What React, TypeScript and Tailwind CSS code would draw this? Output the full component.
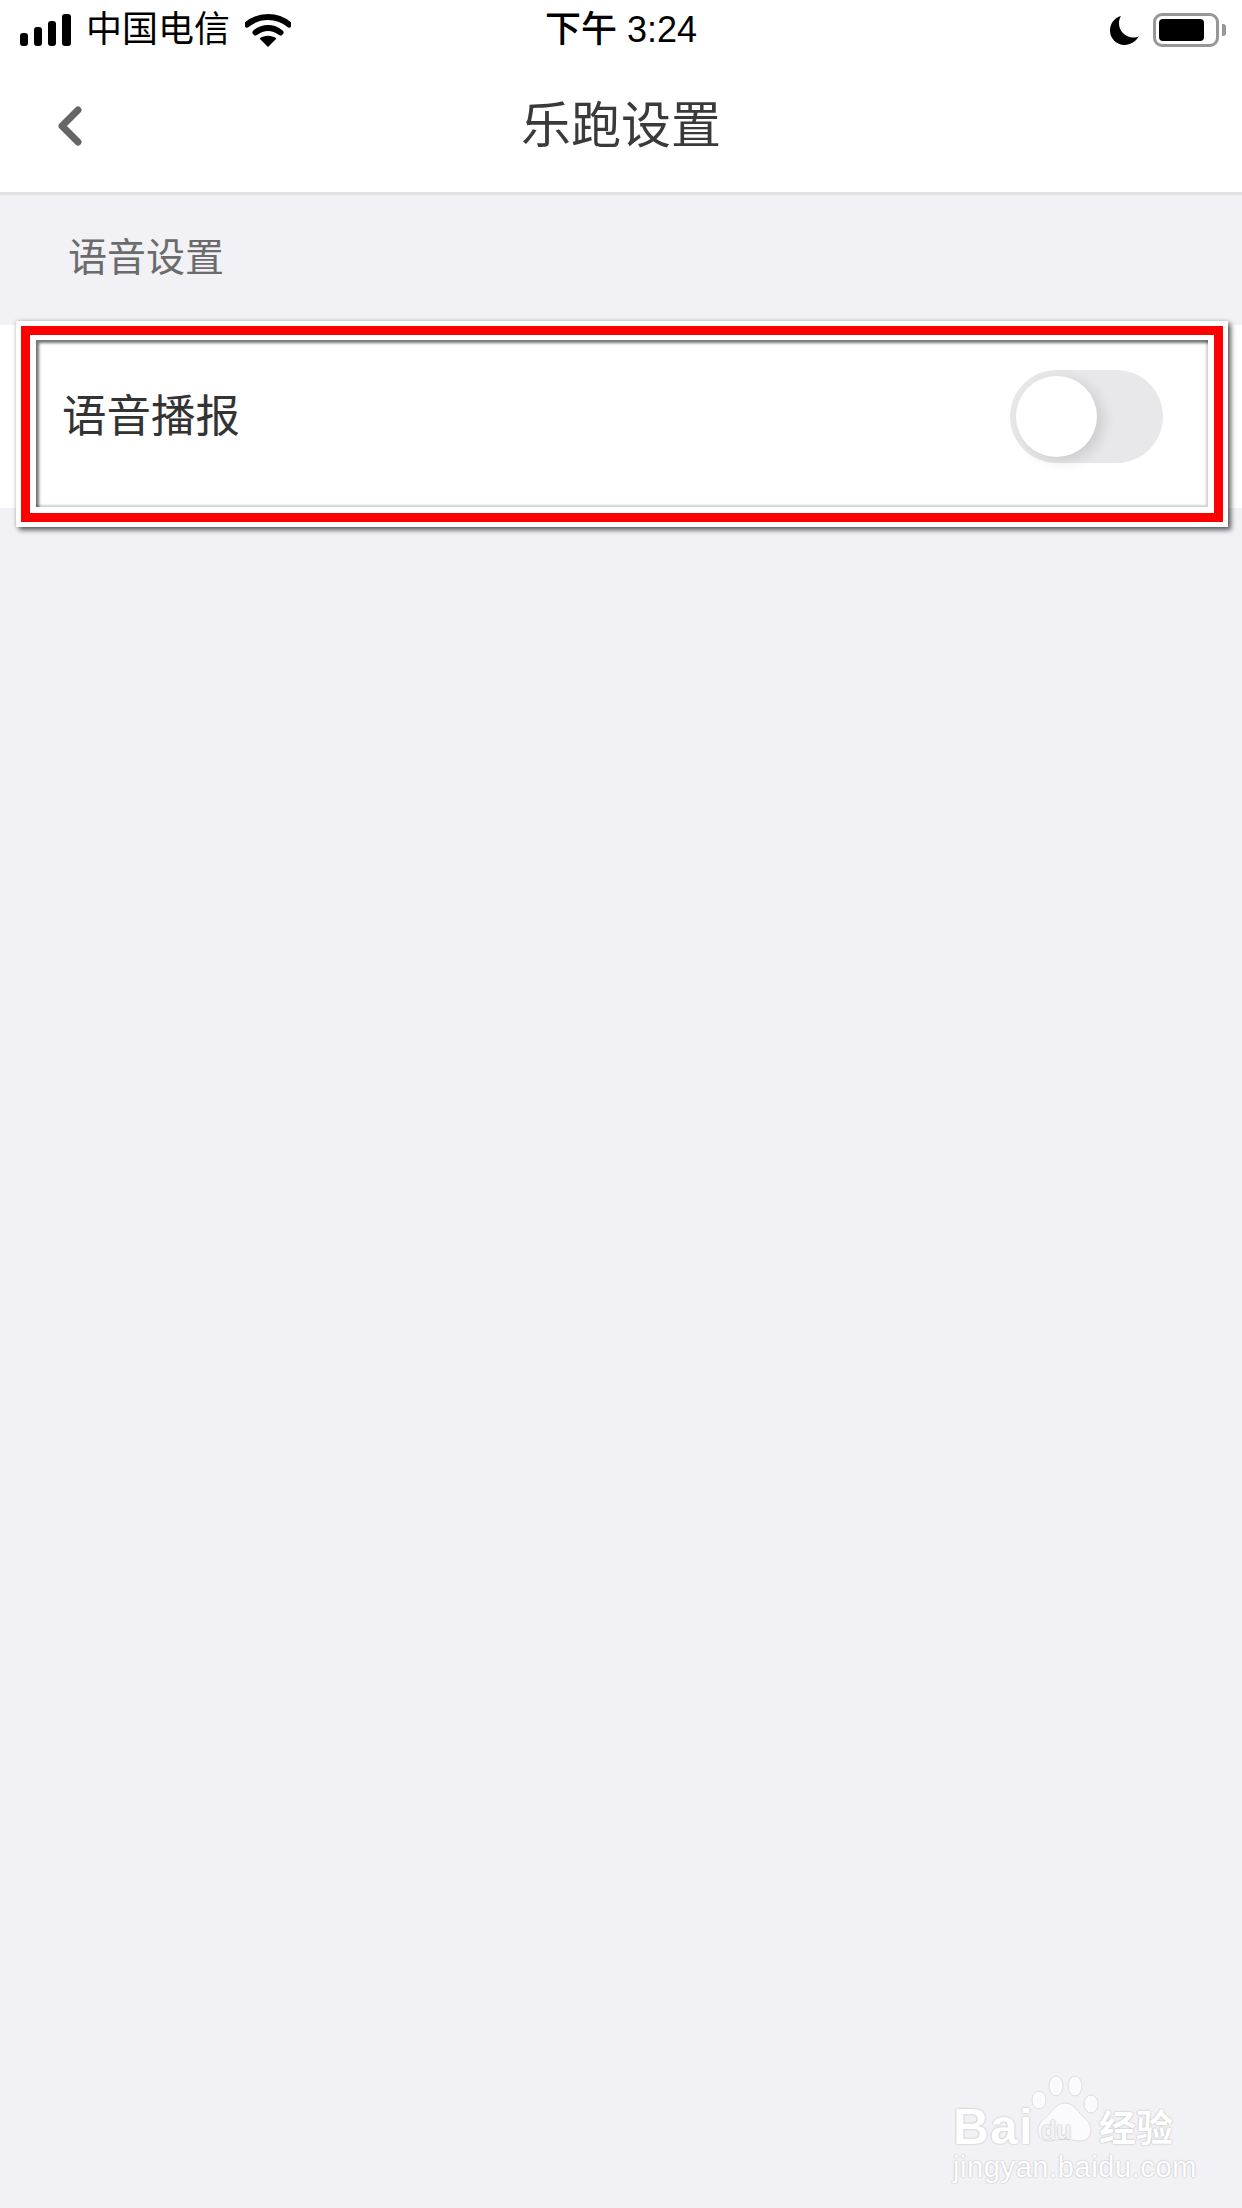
const cjk = "font-['Liberation_Sans','Noto_Sans_CJK_SC',sans-serif]";

function Signal() {
  return (
    <div className="flex items-end gap-[6px] h-[32px]">
      <div className="w-[8px] h-[13px] rounded-[3px] bg-black" />
      <div className="w-[8px] h-[19px] rounded-[3px] bg-black" />
      <div className="w-[8px] h-[25px] rounded-[3px] bg-black" />
      <div className="w-[9px] h-[32px] rounded-[3px] bg-black" />
    </div>
  );
}

function Wifi() {
  return (
    <svg width="46" height="33" viewBox="0 0 46 33" fill="none" className="ml-[15px]">
      <path d="M2 10.5C14 0.5 32 0.5 44 10.5" stroke="#000" strokeWidth="6" strokeLinecap="round" />
      <path d="M10.5 18.5C18 12.5 28 12.5 35.5 18.5" stroke="#000" strokeWidth="6" strokeLinecap="round" />
      <path d="M23 33L14.5 24.5C19.5 20.8 26.5 20.8 31.5 24.5Z" fill="#000" />
    </svg>
  );
}

function Moon() {
  return (
    <svg width="29" height="29" viewBox="0 0 29 29">
      <path d="M11 0C4.5 1.5 0 7.5 0 14.5C0 22.5 6.5 29 14.5 29C20.5 29 26 25.5 29 20C27.5 21 25.500 21.500 23 21.500C15.500 21.500 9 15 9 7.500C9 4.500 9.700 2 11 0Z" fill="#000" />
    </svg>
  );
}

function Battery() {
  return (
    <div className="flex items-center">
      <div className="w-[66px] h-[34px] rounded-[9px] border-[3px] border-[#979797] p-[3px]">
        <div className="w-[45px] h-full rounded-[4px] bg-black" />
      </div>
      <div className="ml-[3px] w-[4px] h-[12px] rounded-r-[3px] bg-[#979797]" />
    </div>
  );
}

function Watermark() {
  return (
    <div className={`absolute left-[953px] top-[2075px] w-[225px] h-[106px] text-white ${cjk}`}>
      <svg width="76" height="70" viewBox="0 0 76 70" className="absolute left-[78px] top-0" fill="#fbfbfd" stroke="#dddde2" strokeWidth="1">
        <ellipse cx="8" cy="25" rx="7" ry="9" />
        <ellipse cx="25" cy="11" rx="7" ry="10" />
        <ellipse cx="44" cy="11" rx="7" ry="10" />
        <ellipse cx="60" cy="29" rx="7" ry="9" />
        <path d="M34 28C44 28 47 38 55 44C62 50 62 66 50 66C42 66 38 64 33 64C27 64 24 66 17 66C5 66 4 50 13 44C21 38 24 28 34 28Z" />
      </svg>
      <span className="absolute left-0 top-[24px] text-[50px] leading-[56px] font-bold tracking-[1px] [text-shadow:0_0_2px_rgba(0,0,0,0.3)]">Bai</span>
      <span className="absolute left-[88px] top-[40px] text-[25px] leading-[30px] font-bold text-[#f1f1f6] [text-shadow:0_0_2px_rgba(0,0,0,0.35)]">du</span>
      <span className="absolute left-[146px] top-[33px] text-[37px] leading-[44px] font-bold [text-shadow:0_0_2px_rgba(0,0,0,0.3)]">经验</span>
      <span className="absolute left-0 top-[76px] text-[29px] leading-[32px] tracking-[0.6px] whitespace-nowrap [text-shadow:0_0_2px_rgba(0,0,0,0.3)]">jingyan.baidu.com</span>
    </div>
  );
}

export default function App() {
  return (
    <div className={`relative w-[1242px] h-[2208px] overflow-hidden bg-[#f1f1f6] flex flex-col ${cjk}`}>
      {/* status bar */}
      <div className="h-[60px] bg-white grid grid-cols-[1fr_auto_1fr] items-center text-black">
        <div className="flex items-center pl-[20px]">
          <Signal />
          <span className="ml-[15px] text-[36px] leading-[36px]">中国电信</span>
          <Wifi />
        </div>
        <span className="text-[36px] leading-[36px] font-medium">下午 3:24</span>
        <div className="flex items-center justify-end gap-[14px] pr-[16px]">
          <Moon />
          <Battery />
        </div>
      </div>

      {/* nav */}
      <div className="h-[135px] bg-white border-b-[3px] border-[#e2e2e2] grid grid-cols-[1fr_auto_1fr] items-center">
        <div className="pl-[56px]">
          <svg width="28" height="40" viewBox="0 0 28 40" fill="none">
            <path d="M22 4L6 20L22 36" stroke="#666" strokeWidth="7" strokeLinecap="round" strokeLinejoin="round" />
          </svg>
        </div>
        <span className="text-[50px] leading-[60px] text-[#3a3a3a]">乐跑设置</span>
        <div />
      </div>

      {/* section */}
      <div className="h-[130px] pl-[68px] pt-[40px] text-[39px] leading-[46px] text-[#6b6b6b]">语音设置</div>

      <div className="relative h-[183px] bg-white flex items-center justify-between pl-[62px] pr-[79px]">
        <span className="text-[44.500px] leading-[54px] text-[#333]">语音播报</span>
        <div className="w-[153px] h-[93px] rounded-full bg-[#e8e8ea] flex items-center pl-[6px]">
          <div className="w-[81px] h-[81px] rounded-full bg-white shadow-[6px_4px_14px_rgba(0,0,0,0.12)]" />
        </div>

        {/* red annotation box */}
        <div className="absolute left-[16px] -top-[4px] w-[1212px] h-[206px] bg-transparent border-[5px] border-white shadow-[3px_3px_5px_rgba(0,0,0,0.6),0_0_4px_rgba(0,0,0,0.2)]">
          <div className="h-full border-[9px] border-[#ff0000]">
            <div className="h-full border-[6px] border-t-[5px] border-white">
              <div className="h-full shadow-[inset_4px_4px_3px_-1px_rgba(0,0,0,0.55),inset_-3px_-3px_2px_-1px_rgba(0,0,0,0.18)]" />
            </div>
          </div>
        </div>
      </div>

      <Watermark />
    </div>
  );
}
